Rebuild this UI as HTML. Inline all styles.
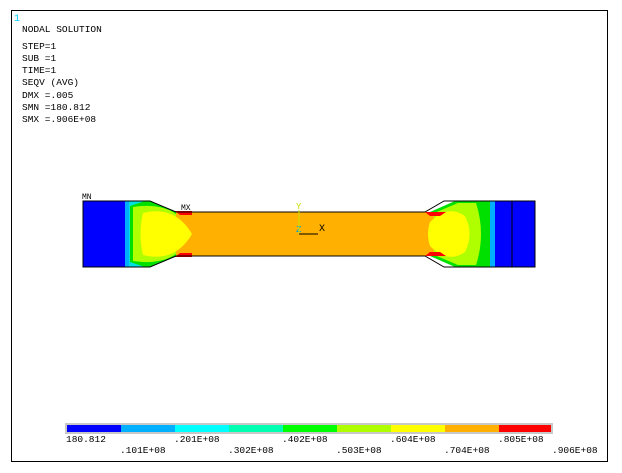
<!DOCTYPE html>
<html><head><meta charset="utf-8"><style>
html,body{margin:0;padding:0;background:#fff}
svg{display:block}
text{font-family:"Liberation Mono",monospace;font-size:9.5px;fill:#000}
</style></head><body>
<svg width="622" height="473" viewBox="0 0 622 473">
<rect x="11.5" y="10.5" width="596" height="451" fill="#fff" stroke="#000" stroke-width="1"/>
<text x="14" y="21" style="fill:#00d0ff;font-size:10px">1</text>
<text x="22" y="32">NODAL SOLUTION</text>
<text x="22" y="49">STEP=1</text>
<text x="22" y="61">SUB =1</text>
<text x="22" y="73">TIME=1</text>
<text x="22" y="85">SEQV      (AVG)</text>
<text x="22" y="98">DMX =.005</text>
<text x="22" y="110">SMN =180.812</text>
<text x="22" y="122">SMX =.906E+08</text>

<path d="M83 201 H150 L176 212 H190 V256 H176 L150 267 H83 Z" fill="#00e000"/>
<rect x="83" y="201" width="42" height="66" fill="#0000ff"/>
<rect x="125" y="201" width="5" height="66" fill="#00b0ff"/>
<path d="M129 201 H145 L130 206 V262 L145 267 H129 Z" fill="#00e0e0"/>
<path d="M133 207 Q160 203 176 214 L190 214 V254 L176 254 Q160 265 133 261 Z" fill="#b0ff00"/>
<path d="M425 212 L444 201 H535 V267 H444 L425 256 Z" fill="#fff"/>
<path d="M455 201 H496 V267 H455 L430 256 V212 Z" fill="#00e000"/>
<rect x="495" y="201" width="40" height="66" fill="#0000ff"/>
<rect x="490" y="201" width="5" height="66" fill="#00b0ff"/>
<path d="M458 203 H476 Q486 234 476 265 H458 L432 254 V214 Z" fill="#b0ff00"/>
<rect x="176" y="212" width="258" height="44" fill="#ffb000"/>
<path d="M143 213 Q175 205 192 234 Q175 263 143 255 Q138 234 143 213 Z" fill="#ffff00"/>
<path d="M175 211 H192 V215 H180 Z M175 257 H192 V253 H180 Z" fill="#ff0000"/>
<path d="M465 216 Q448 204 430 222 Q426 234 430 246 Q448 264 465 252 Q474 234 465 216 Z" fill="#ffff00"/>
<path d="M425 212 H446 L440 216 H430 Z M425 256 H446 L440 252 H430 Z" fill="#ff0000"/>
<path d="M83 201 H150 L176 212 H425 L444 201 H535 V267 H444 L425 256 H176 L150 267 H83 Z M512 201 V267" stroke="#000" stroke-width="1" fill="none"/>
<text x="82" y="199" style="font-size:8px">MN</text>
<text x="181" y="210" style="font-size:8px">MX</text>
<text x="296" y="209" style="font-size:9px;fill:#c8e000">Y</text>
<text x="296" y="232" style="font-size:9px;fill:#00a0e0">Z</text>
<line x1="299" y1="210" x2="299" y2="234" stroke="#c8e000"/>
<line x1="299" y1="234" x2="318" y2="234" stroke="#000"/>
<text x="319" y="231" style="font-size:10px">X</text>

<rect x="65" y="423" width="488" height="11" fill="#c8c8c8"/>
<rect x="67" y="425" width="54" height="7" fill="#0000ff"/>
<rect x="121" y="425" width="54" height="7" fill="#00b0ff"/>
<rect x="175" y="425" width="54" height="7" fill="#00ffff"/>
<rect x="229" y="425" width="54" height="7" fill="#00ffb0"/>
<rect x="283" y="425" width="54" height="7" fill="#00ff00"/>
<rect x="337" y="425" width="54" height="7" fill="#b0ff00"/>
<rect x="391" y="425" width="54" height="7" fill="#ffff00"/>
<rect x="445" y="425" width="54" height="7" fill="#ffb000"/>
<rect x="499" y="425" width="52" height="7" fill="#ff0000"/>
<g style="font-size:9px">
<text x="66" y="442">180.812</text>
<text x="174" y="442">.201E+08</text>
<text x="282" y="442">.402E+08</text>
<text x="390" y="442">.604E+08</text>
<text x="498" y="442">.805E+08</text>
<text x="120" y="453">.101E+08</text>
<text x="228" y="453">.302E+08</text>
<text x="336" y="453">.503E+08</text>
<text x="444" y="453">.704E+08</text>
<text x="552" y="453">.906E+08</text>
</g>
</svg>
</body></html>
